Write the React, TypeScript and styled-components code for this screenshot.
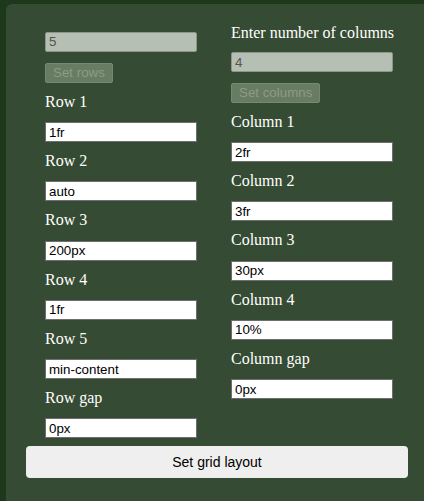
import React from "react";
import styled, { createGlobalStyle } from "styled-components";

const Global = createGlobalStyle`
  html, body {
    margin: 0;
    padding: 0;
    background: #1e381c;
    overflow: hidden;
  }
  * { box-sizing: border-box; }
`;

const Panel = styled.div`
  margin: 4px 0 0 6px;
  width: 422px;
  min-height: 520px;
  background: #364b33;
  border-radius: 6px;
  padding: 19.6px 20px 40px 20px;
`;

const Columns = styled.div`
  display: grid;
  grid-template-columns: 152px 162px;
  column-gap: 34px;
  padding-left: 19px;
  align-items: start;
`;

const Column = styled.div<{ $offset?: number }>`
  display: flex;
  flex-direction: column;
  align-items: flex-start;
  padding-top: ${(p) => p.$offset ?? 0}px;
`;

const Label = styled.div<{ $first?: boolean }>`
  font-family: "Liberation Serif", "Times New Roman", serif;
  font-size: 16px;
  line-height: 18.4px;
  color: #ffffff;
  margin: ${(p) => (p.$first ? "0 0 10px" : "10px 0 10.8px")};
  white-space: nowrap;
`;

const TextInput = styled.input`
  width: 100%;
  height: 20px;
  margin: 0;
  padding: 0 3px;
  border: 1px solid #6e6e6e;
  border-radius: 0;
  background: #ffffff;
  color: #000;
  font-family: "Liberation Sans", Arial, sans-serif;
  font-size: 13.33px;
  outline: none;

  &:disabled {
    background: #b6bfb3;
    border-color: #8d9689;
    border-radius: 2px;
    color: #50564e;
    -webkit-text-fill-color: #50564e;
    opacity: 1;
  }
`;

const SmallButton = styled.button`
  margin-top: 11px;
  height: 20px;
  padding: 0 7px;
  border: 1px solid #76886f;
  border-radius: 2px;
  background: #687b63;
  color: #8c9c87;
  font-family: "Liberation Sans", Arial, sans-serif;
  font-size: 13.33px;
  line-height: 18px;
`;

const MainButton = styled.button`
  display: block;
  width: 382px;
  height: 32px;
  margin-top: 7.5px;
  border: none;
  border-radius: 4px;
  background: #efefef;
  color: #000;
  font-family: "Liberation Sans", Arial, sans-serif;
  font-size: 14px;
`;

const rows = ["1fr", "auto", "200px", "1fr", "min-content"];
const cols = ["2fr", "3fr", "30px", "10%"];

export default function App() {
  return (
    <>
      <Global />
      <Panel>
        <Columns>
          <Column $offset={8.4}>
            <TextInput disabled defaultValue="5" />
            <SmallButton disabled>Set rows</SmallButton>
            {rows.map((v, i) => (
              <React.Fragment key={i}>
                <Label>Row {i + 1}</Label>
                <TextInput defaultValue={v} />
              </React.Fragment>
            ))}
            <Label>Row gap</Label>
            <TextInput defaultValue="0px" />
          </Column>
          <Column>
            <Label $first>Enter number of columns</Label>
            <TextInput disabled defaultValue="4" />
            <SmallButton disabled>Set columns</SmallButton>
            {cols.map((v, i) => (
              <React.Fragment key={i}>
                <Label>Column {i + 1}</Label>
                <TextInput defaultValue={v} />
              </React.Fragment>
            ))}
            <Label>Column gap</Label>
            <TextInput defaultValue="0px" />
          </Column>
        </Columns>
        <MainButton>Set grid layout</MainButton>
      </Panel>
    </>
  );
}
